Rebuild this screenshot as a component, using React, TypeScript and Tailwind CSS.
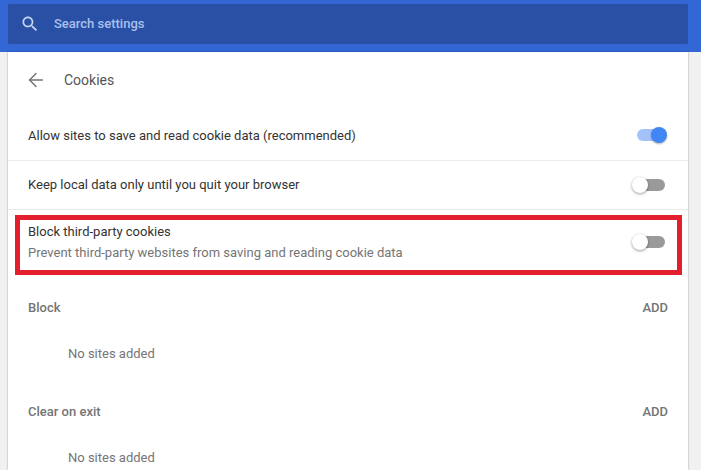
import React from "react";
import { ArrowLeft } from "lucide-react";

function SearchIcon() {
  return (
    <svg viewBox="0 0 24 24" className="w-[20px] h-[20px] shrink-0" fill="#c6d5f3">
      <path d="M15.5 14h-.79l-.28-.27C15.41 12.59 16 11.11 16 9.5 16 5.91 13.09 3 9.5 3S3 5.91 3 9.5 5.91 16 9.5 16c1.61 0 3.09-.59 4.23-1.57l.27.28v.79l5 4.99L20.49 19l-4.99-5zm-6 0C7.01 14 5 11.99 5 9.5S7.01 5 9.5 5 14 7.01 14 9.5 11.99 14 9.5 14z" />
    </svg>
  );
}

function Toggle({ on }: { on?: boolean }) {
  return (
    <div className="relative w-[28px] h-[12px] shrink-0">
      <div className={`w-full h-full rounded-full ${on ? "bg-[#a3c2fa]" : "bg-[#9a9a9a]"}`} />
      {on ? (
        <div className="absolute right-[-2px] top-[-2px] w-[16px] h-[16px] rounded-full bg-[#4285f4] shadow-[0_1px_2px_rgba(0,0,0,0.3)]" />
      ) : (
        <div className="absolute left-[-5px] top-[-2px] w-[16px] h-[16px] rounded-full bg-white shadow-[0_1px_3px_rgba(0,0,0,0.4)]" />
      )}
    </div>
  );
}

function Section({ title, mt }: { title: string; mt: string }) {
  return (
    <>
      <div className={`flex items-center justify-between h-[48px] pl-[20px] pr-[20px] ${mt}`}>
        <span className="font-medium text-[#757575]">{title}</span>
        <span className="font-medium text-[#757575]">ADD</span>
      </div>
      <div className="flex items-center h-[48px] pl-[60px] -mt-[2px] text-[#757575]">No sites added</div>
    </>
  );
}

export default function App() {
  return (
    <div className="w-[701px] h-[470px] overflow-hidden bg-[#f1f1f1] text-[13px] font-['Roboto',sans-serif]">
      <div className="h-[52px] bg-[#3367d6] px-[8px] pt-[4px] pr-[13px]">
        <div className="h-[40px] bg-[#2a50a5] rounded-[1px] flex items-center pl-[12px]">
          <SearchIcon />
          <span className="ml-[14px] text-[#a9c0ee] font-medium">Search settings</span>
        </div>
      </div>
      <div className="ml-[8px] w-[680px] h-[418px] bg-white shadow-[0_0_2px_rgba(0,0,0,0.35)]">
        <div className="h-[56px] flex items-center pl-[17px]">
          <ArrowLeft className="w-[22px] h-[22px] text-[#757575]" strokeWidth={1.6} />
          <span className="ml-[17px] text-[14px] text-[#555555]">Cookies</span>
        </div>
        <div className="mt-[2px] h-[51px] flex items-center justify-between pl-[20px] pr-[23px] border-b border-[#ebebeb]">
          <span className="pt-[2px] text-[#333333]">Allow sites to save and read cookie data (recommended)</span>
          <Toggle on />
        </div>
        <div className="h-[49px] flex items-center justify-between pl-[20px] pr-[23px] border-b border-[#ebebeb]">
          <span className="text-[#333333]">Keep local data only until you quit your browser</span>
          <Toggle />
        </div>
        <div className="mt-[5px] ml-[7px] mr-[6px] h-[60px] border-[5px] border-[#e31e2d] flex items-center justify-between pl-[8px] pr-[12px] pb-[7px]">
          <div className="flex flex-col leading-[21px]">
            <span className="text-[#333333]">Block third-party cookies</span>
            <span className="text-[#757575]">Prevent third-party websites from saving and reading cookie data</span>
          </div>
          <Toggle />
        </div>
        <Section title="Block" mt="mt-[9px]" />
        <Section title="Clear on exit" mt="mt-[10px]" />
      </div>
    </div>
  );
}
